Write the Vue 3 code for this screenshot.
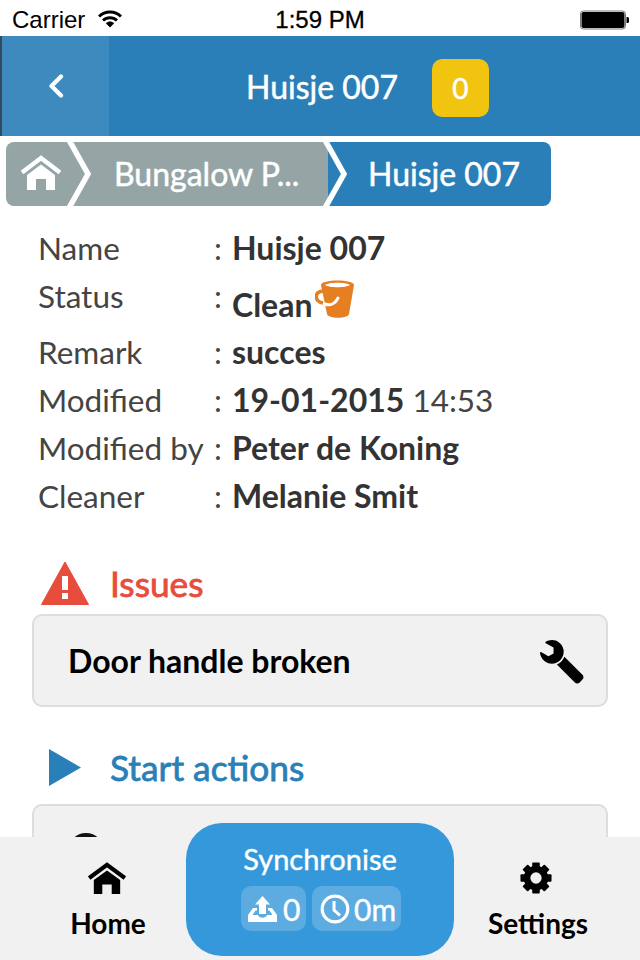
<script setup>
const info = [
  { label: 'Name', value: 'Huisje 007' },
  { label: 'Status', value: 'Clean', bucket: true },
  { label: 'Remark', value: 'succes' },
  { label: 'Modified', value: '19-01-2015', extra: ' 14:53' },
  { label: 'Modified by', value: 'Peter de Koning' },
  { label: 'Cleaner', value: 'Melanie Smit' },
]
const teeth = [0, 45, 90, 135, 180, 225, 270, 315]
</script>

<template>
  <div class="screen">
    <div class="status">
      <div class="status-left">
        <span>Carrier</span>
        <svg class="wifi" width="24" height="18" viewBox="0 0 24 18">
          <path d="M1 6.500C7 .500 17 .500 23 6.500" fill="none" stroke="#000" stroke-width="3" />
          <path d="M5 10.500C9 6.800 15 6.800 19 10.500" fill="none" stroke="#000" stroke-width="3" />
          <path d="M7.800 13.200C10.500 11 13.500 11 16.200 13.200L12 17.500Z" fill="#000" />
        </svg>
      </div>
      <span class="time">1:59 PM</span>
      <svg class="battery" width="50" height="20" viewBox="0 0 50 20">
        <rect x="1.500" y="2" width="43" height="16" rx="2" fill="#000" />
        <rect x="0.500" y="1" width="45" height="18" rx="3" fill="none" stroke="#555" stroke-width="0.800" />
        <path d="M46.500 7h1a1.500 1.500 0 0 1 1.500 1.500v3a1.500 1.500 0 0 1-1.500 1.500h-1z" fill="#000" />
      </svg>
    </div>

    <header class="header">
      <div class="back">
        <svg width="16" height="24" viewBox="0 0 16 24">
          <path d="M13 2.500L3.500 12L13 21.500" fill="none" stroke="#fff" stroke-width="4.200" stroke-linecap="round" stroke-linejoin="round" />
        </svg>
      </div>
      <div class="title">
        <span>Huisje 007</span>
        <span class="badge">0</span>
      </div>
    </header>

    <nav class="crumbs">
      <div class="crumb crumb-home">
        <svg width="40" height="36" viewBox="0 0 40 36">
          <path d="M1 17.500L20 3L39 17.500" fill="none" stroke="#fff" stroke-width="4.500" />
          <path d="M6 20L20 9.500L34 20V35H25V24H15V35H6Z" fill="#fff" />
        </svg>
      </div>
      <div class="crumb crumb-mid">Bungalow P...</div>
      <div class="crumb crumb-last">Huisje 007</div>
      <svg class="chevrons" width="346" height="64" viewBox="0 0 346 64">
        <path d="M63 -2L82 32L63 66" fill="none" stroke="#fff" stroke-width="5.500" />
        <path d="M319 -2L338 32L319 66" fill="none" stroke="#fff" stroke-width="5.500" />
      </svg>
    </nav>

    <section class="info">
      <div v-for="row in info" :key="row.label" class="row" :class="{ 'row-tall': row.bucket }">
        <span class="label">{{ row.label }}</span>
        <span class="colon">:</span>
        <span class="value">
          <b>{{ row.value }}</b>{{ row.extra }}
          <svg v-if="row.bucket" class="bucket" width="40" height="38" viewBox="0 0 40 38">
            <path d="M6 5C6 -1 39 -1 39 5L34 34C33 39 13 39 12 34Z" fill="#e67e22" />
            <path d="M10 5C14 2 31 2 35 5C31 8 14 8 10 5Z" fill="#fff" />
            <path d="M10 24C15 26 20 24 23 18" fill="none" stroke="#fff" stroke-width="3" stroke-linecap="round" />
            <path d="M8 11C-1 12 -1 21 8 23" fill="none" stroke="#e67e22" stroke-width="3.500" />
          </svg>
        </span>
      </div>
    </section>

    <section class="group">
      <h2 class="heading heading-issue">
        <span class="heading-icon">
          <svg width="48" height="44" viewBox="0 0 48 44">
            <path d="M24 1L47.500 43.500H.5Z" fill="#e74c3c" stroke="#e74c3c" stroke-width="1" stroke-linejoin="round" />
            <rect x="21" y="15" width="6" height="14" fill="#fff" />
            <rect x="21" y="32" width="6" height="6" fill="#fff" />
          </svg>
        </span>
        Issues
      </h2>
      <div class="card">
        <span>Door handle broken</span>
        <svg class="wrench" width="44" height="44" viewBox="64 128 1664 1664">
          <path transform="translate(1792 0) scale(-1 1)" d="M1092 1052l-682 682q-37 37-90 37-52 0-91-37l-106-108q-38-36-38-90 0-53 38-91l681-681q39 98 114.500 173.500t173.500 114.500zm634-435q0 39-23 106-47 134-164.500 217.500t-258.500 83.500q-185 0-316.500-131.500t-131.500-316.500 131.500-316.500 316.500-131.500q58 0 121.500 16.500t107.500 46.500q16 11 16 28t-16 28l-293 169v224l193 107q5-3 79-48.500t135.500-81 70.500-35.500q15 0 23.500 10t8.500 25z" fill="#000" />
        </svg>
      </div>
    </section>

    <section class="group group-start">
      <h2 class="heading heading-start">
        <span class="heading-icon">
          <svg width="32" height="37" viewBox="0 0 32 37"><path d="M0 0L32 18.500L0 37Z" fill="#2980b9" /></svg>
        </span>
        Start actions
      </h2>
      <div class="card card-start">
        <span class="action-dot"></span>
      </div>
    </section>

    <footer class="tabbar">
      <div class="tab tab-home">
        <svg width="38" height="32" viewBox="0 0 40 34">
          <path d="M1 17L20 3L39 17" fill="none" stroke="#000" stroke-width="4.500" />
          <path d="M6 19L20 9L34 19V34H25V24H15V34H6Z" fill="#000" />
        </svg>
        <span>Home</span>
      </div>
      <div class="sync">
        <div class="sync-title">Synchronise</div>
        <div class="pills">
          <span class="pill pill-up">
            <svg width="29" height="28" viewBox="0 0 29 28">
              <path d="M14.500 1L22 9.500H18V19H11V9.500H7Z" fill="#fff" />
              <path d="M5 13H9V15.500H7.500L4.500 20H10C11 23.500 18 23.500 19 20H24.500L21.500 15.500H20V13H24L29 20V27H0V20Z" fill="#fff" />
            </svg>
            0
          </span>
          <span class="pill pill-time">
            <svg width="30" height="30" viewBox="0 0 30 30">
              <circle cx="15" cy="15" r="12.800" fill="none" stroke="#fff" stroke-width="3.200" />
              <path d="M14 7V16L20 21.500" fill="none" stroke="#fff" stroke-width="3" />
            </svg>
            0m
          </span>
        </div>
      </div>
      <div class="tab tab-settings">
        <svg width="32" height="32" viewBox="0 0 34 34">
          <rect v-for="a in teeth" :key="a" x="13" y="0.500" width="8" height="8" rx="1" fill="#000" :transform="`rotate(${a} 17 17)`" />
          <circle cx="17" cy="17" r="9.500" fill="none" stroke="#000" stroke-width="7" />
        </svg>
        <span>Settings</span>
      </div>
    </footer>
  </div>
</template>

<style>
html, body { margin: 0; padding: 0; background: #fff; }
</style>

<style scoped>
.screen {
  position: relative;
  width: 640px;
  height: 960px;
  overflow: hidden;
  background: #fff;
  font-family: Lato, "Open Sans", sans-serif;
  color: #333;
}
.status {
  position: relative;
  height: 36px;
  display: flex;
  align-items: center;
  justify-content: space-between;
  padding: 0 10px 0 12px;
  font-family: "Liberation Sans", Arial, sans-serif;
  font-size: 24px;
  color: #000;
}
.status-left { display: flex; align-items: center; gap: 13px; padding-top: 3px; }
.wifi { margin-top: -2px; }
.time { position: absolute; left: 0; right: 0; text-align: center; -webkit-text-stroke: 0.300px #000; padding-top: 3px; }
.battery { margin-top: 4px; }

.header {
  height: 100px;
  background: #2a7fb8;
  border-left: 2px solid #34495e;
  box-sizing: border-box;
  display: flex;
  color: #fff;
}
.back {
  width: 107px;
  background: #3d8abf;
  display: flex;
  align-items: center;
  justify-content: center;
}
.title {
  flex: 1;
  display: flex;
  align-items: center;
  font-size: 32px;
  -webkit-text-stroke: 0.500px #fff;
  padding-left: 137px;
  gap: 34px;
}
.badge {
  width: 57px;
  height: 58px;
  border-radius: 10px;
  background: #f1c40f;
  display: flex;
  align-items: center;
  justify-content: center;
  font-size: 28px;
  margin-top: 3px;
}

.crumbs {
  position: relative;
  display: flex;
  width: 545px;
  height: 64px;
  margin: 6px 0 0 6px;
  border-radius: 8px;
  overflow: hidden;
  color: #fff;
  font-size: 32px;
  -webkit-text-stroke: 0.500px #fff;
}
.crumb { display: flex; align-items: center; height: 100%; box-sizing: border-box; background: #95a5a6; padding-bottom: 2px; }
.crumb-home { width: 70px; padding-left: 15px; }
.crumb-mid { width: 252px; padding-left: 38px; }
.crumb-last { flex: 1; padding-left: 40px; background: #2a7fb8; }
.chevrons { position: absolute; left: 0; top: 0; }

.info { padding: 18px 0 0 38px; font-size: 31.500px; }
.row { display: flex; height: 48px; align-items: flex-start; line-height: 48px; color: #444; }
.row-tall { height: 56px; }
.label { width: 176px; }
.colon { width: 18px; }
.value { display: flex; align-items: flex-start; white-space: pre; font-weight: 400; }
.value b { font-weight: 700; color: #333; font-size: 32px; }
.row-tall .value { padding-top: 9px; }
.bucket { margin: -1px 0 0 2px; }

.group { padding: 0 32px; margin-top: 38px; }
.group-start { margin-top: 35px; }
.heading {
  display: flex;
  align-items: center;
  margin: 0;
  font-size: 35.300px;
  font-weight: 400;
  -webkit-text-stroke: 0.800px currentColor;
  height: 50px;
}
.heading-issue { color: #e74c3c; }
.heading-start { color: #2980b9; }
.heading-icon { width: 78px; display: flex; padding-left: 9px; box-sizing: border-box; }
.heading-start .heading-icon { padding-left: 17px; }
.card {
  margin-top: 6px;
  height: 93px;
  box-sizing: border-box;
  border: 2px solid #ddd;
  border-radius: 10px;
  background: #f1f1f1;
  display: flex;
  align-items: center;
  justify-content: space-between;
  padding: 0 22px 0 34px;
  font-size: 32px;
  font-weight: 700;
  color: #000;
}
.wrench { margin-top: 3px; }
.card-start { margin-top: 12px; align-items: flex-start; padding-top: 27px; }
.action-dot { width: 36px; height: 36px; border-radius: 50%; background: #111; }

.tabbar {
  position: absolute;
  left: 0;
  right: 0;
  bottom: 0;
  height: 123px;
  background: #f1f1f1;
  display: flex;
  align-items: flex-start;
  justify-content: space-between;
  color: #000;
  font-size: 28px;
  font-weight: 700;
}
.tab {
  width: 186px;
  box-sizing: border-box;
  display: flex;
  flex-direction: column;
  align-items: center;
  gap: 11px;
  padding-top: 25px;
  line-height: 36px;
}
.tab-home { padding-left: 30px; }
.tab-home svg { margin-left: -2px; }
.tab-settings { padding-right: 18px; }
.tab-settings svg { margin-right: 4px; }
.sync {
  width: 268px;
  height: 133px;
  margin-top: -14px;
  box-sizing: border-box;
  padding-top: 18px;
  border-radius: 36px;
  background: #3498db;
  color: #fff;
  display: flex;
  flex-direction: column;
  align-items: center;
  gap: 10px;
  font-weight: 400;
  -webkit-text-stroke: 0.400px #fff;
}
.sync-title { font-size: 29px; line-height: 35px; }
.pills { display: flex; gap: 6px; font-size: 30px; margin-left: 2px; }
.pill {
  height: 45px;
  box-sizing: border-box;
  border-radius: 10px;
  background: rgba(255, 255, 255, 0.2);
  display: flex;
  align-items: center;
}
.pill-up { width: 65px; padding-left: 7px; gap: 6px; }
.pill-time { width: 89px; padding-left: 8px; gap: 4px; }
</style>
